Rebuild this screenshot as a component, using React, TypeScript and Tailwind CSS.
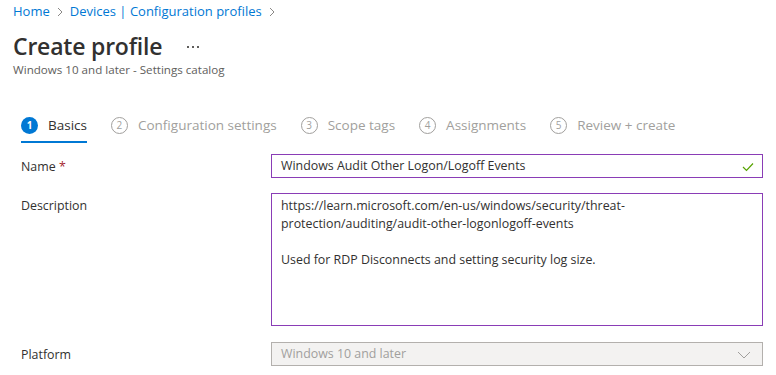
const steps = [
  { n: 1, label: "Basics", active: true },
  { n: 2, label: "Configuration settings", active: false },
  { n: 3, label: "Scope tags", active: false },
  { n: 4, label: "Assignments", active: false },
  { n: 5, label: "Review + create", active: false },
];

function Chevron() {
  return (
    <svg width="8" height="10" viewBox="0 0 8 10" className="mx-[6px]">
      <path d="M2 1 L6 5 L2 9" fill="none" stroke="#8a8886" strokeWidth="1" />
    </svg>
  );
}

export default function App() {
  return (
    <div
      className="w-[776px] h-[375px] overflow-hidden bg-white text-[#323130]"
      style={{ fontFamily: '"Segoe UI", "Open Sans", sans-serif' }}
    >
      {/* breadcrumb */}
      <div className="flex items-center pl-[13px] mt-[2px] h-[20px] text-[13px] text-[#0078d4]">
        <span>Home</span>
        <Chevron />
        <span>Devices | Configuration profiles</span>
        <Chevron />
      </div>

      {/* header */}
      <div className="flex items-center pl-[13px] mt-[8px] h-[32px]">
        <h1 className="text-[23px] font-semibold tracking-[-0.2px]">Create profile</h1>
        <div className="flex gap-[3px] ml-[25px] mt-[2px]">
          <span className="w-[2px] h-[2px] bg-[#605e5c]" />
          <span className="w-[2px] h-[2px] bg-[#605e5c]" />
          <span className="w-[2px] h-[2px] bg-[#605e5c]" />
        </div>
      </div>
      <div className="pl-[13px] h-[16px] leading-[16px] text-[11.6px] text-[#605e5c]">
        Windows 10 and later - Settings catalog
      </div>

      {/* wizard steps */}
      <div className="flex pl-[21px] mt-[37px] gap-[24px]">
        {steps.map((s) => (
          <div key={s.n} className="flex flex-col">
            <div className="flex items-center h-[20px] gap-[10px]">
              {s.active ? (
                <span className="w-[17px] h-[17px] rounded-full bg-[#0078d4] text-white text-[10px] font-bold flex items-center justify-center">
                  {s.n}
                </span>
              ) : (
                <span className="w-[17px] h-[17px] rounded-full border border-[#a19f9d] text-[#a19f9d] text-[10px] flex items-center justify-center">
                  {s.n}
                </span>
              )}
              <span
                className={
                  s.active
                    ? "text-[13.5px] text-[#323130]"
                    : "text-[13.5px] text-[#a19f9d]"
                }
              >
                {s.label}
              </span>
            </div>
            <div
              className={
                s.active ? "mt-[6px] h-[2px] bg-[#0078d4]" : "mt-[6px] h-[2px]"
              }
            />
          </div>
        ))}
      </div>

      {/* form */}
      <div className="flex flex-col pl-[21px] mt-[11px] text-[12.4px]">
        <div className="flex items-center">
          <label className="w-[250px] shrink-0 mt-[3px]">
            Name <span className="text-[#a4262c]">*</span>
          </label>
          <div className="flex items-center shrink-0 w-[492px] h-[24px] border border-[#8a3db6] px-[9px] pt-[1px]">
            <span className="flex-1">Windows Audit Other Logon/Logoff Events</span>
            <svg width="12" height="10" viewBox="0 0 12 10" className="mr-[-1px]">
              <path d="M1 5 L4.5 8.5 L11 1.5" fill="none" stroke="#57a300" strokeWidth="1.2" />
            </svg>
          </div>
        </div>

        <div className="flex mt-[15px]">
          <label className="w-[250px] shrink-0 pt-[4px] leading-[18px]">Description</label>
          <div className="shrink-0 w-[492px] h-[133px] border border-[#8a3db6] px-[9px] pt-[3px] leading-[18px]">
            <div>https://learn.microsoft.com/en-us/windows/security/threat-</div>
            <div>protection/auditing/audit-other-logonlogoff-events</div>
            <div className="h-[18px]" />
            <div>Used for RDP Disconnects and setting security log size.</div>
          </div>
        </div>

        <div className="flex items-center mt-[16px]">
          <label className="w-[250px] shrink-0 mt-[3px]">Platform</label>
          <div className="flex items-center shrink-0 w-[492px] h-[24px] border border-[#b3b0ad] bg-[#f3f2f1] px-[9px] pt-[1px] text-[#a19f9d]">
            <span className="flex-1">Windows 10 and later</span>
            <svg width="14" height="8" viewBox="0 0 14 8" className="mr-[2px]">
              <path d="M1 1 L7 7 L13 1" fill="none" stroke="#a19f9d" strokeWidth="1" />
            </svg>
          </div>
        </div>
      </div>
    </div>
  );
}
